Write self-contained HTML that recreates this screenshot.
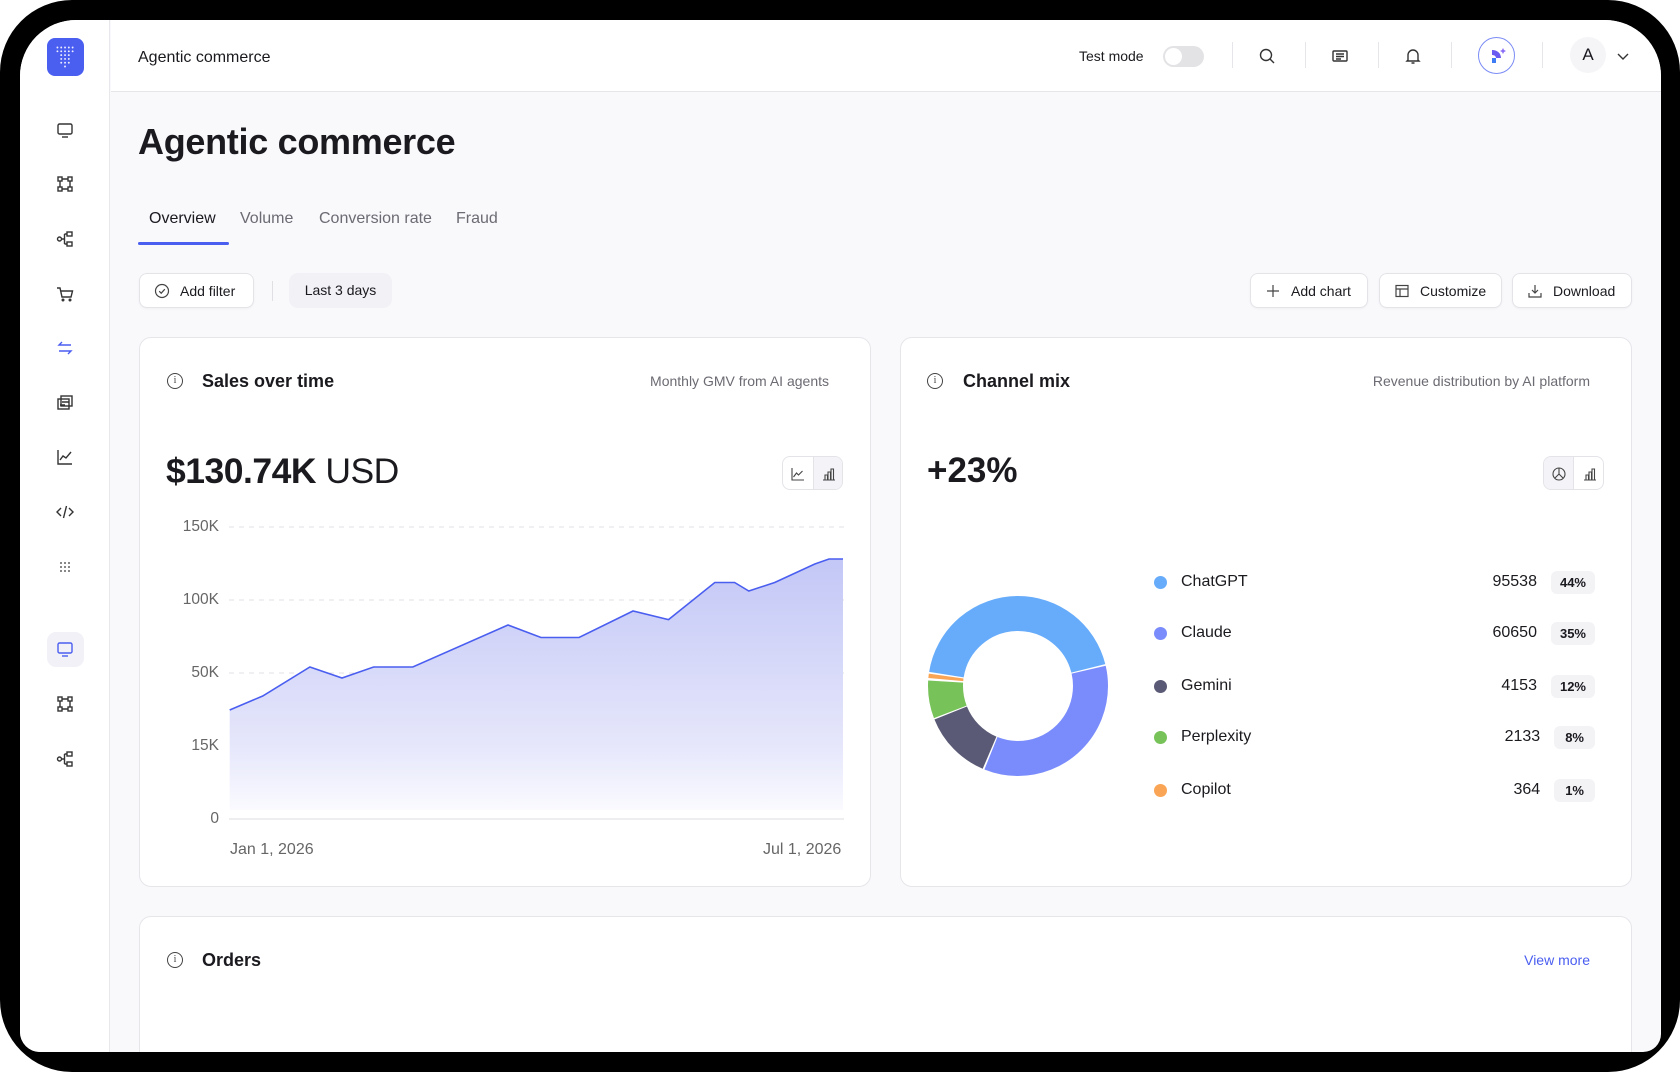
<!DOCTYPE html>
<html><head><meta charset="utf-8"><style>
*{box-sizing:border-box;margin:0;padding:0}
body{width:1680px;height:1072px;background:#fff;font-family:"Liberation Sans",sans-serif;color:#1a1a1f;position:relative;overflow:hidden}
.frame{position:absolute;left:0;top:0;width:1680px;height:1072px;background:#000;border-radius:72px}
.screen{position:absolute;left:20px;top:20px;width:1641px;height:1032px;background:#f9f8fb;border-radius:56px 56px 18px 20px;overflow:hidden}
.abs{position:absolute}
.side{position:absolute;left:0;top:0;width:90px;height:1032px;background:#fff;border-right:1px solid #e8e7ec}
.top{position:absolute;left:91px;top:0;right:0;height:72px;background:#fff;border-bottom:1px solid #e6e5ea}
.ico{position:absolute;width:20px;height:20px;stroke:#333;fill:none;stroke-width:1.4}
.btn{position:absolute;height:35px;background:#fff;border:1px solid #e4e3e8;border-radius:8px;font-size:14px;display:flex;align-items:center;gap:10px;padding:0 14px;box-shadow:0 1px 2px rgba(0,0,0,.04)}
.card{position:absolute;background:#fff;border:1px solid #e6e5ea;border-radius:12px}
.ctitle{position:absolute;font-size:18px;font-weight:bold}
.csub{position:absolute;font-size:14px;color:#6b6b73;text-align:right}
.info{position:absolute;width:16px;height:16px;border:1.2px solid #444;border-radius:50%;font-size:10px;text-align:center;line-height:14px;color:#444;font-family:"Liberation Serif",serif}
.sep{position:absolute;top:22px;width:1px;height:26px;background:#e6e5ea}
.yl{position:absolute;font-size:15.5px;color:#666;text-align:right;width:60px}
.row{position:absolute;left:1134px;width:441px;height:24px;font-size:16px;display:flex;align-items:center}
.dot{width:13px;height:13px;border-radius:50%;margin-right:14px}
.val{margin-left:auto;font-size:16px}
.pct{margin-left:14px;background:#f3f3f6;border-radius:6px;font-size:13px;font-weight:bold;padding:4px 9px}
</style></head><body>
<div class="frame"></div>
<div class="screen">
 <div class="side">
  <div class="abs" style="left:27px;top:18px;width:37px;height:38px;background:#4a5ef0;border-radius:8px;">
   <svg width="37" height="38" viewBox="0 0 37 40"><g fill="#fff" opacity=".9">
   <circle cx="10" cy="10" r="1"/><circle cx="14" cy="10" r="1"/><circle cx="18" cy="10" r="1"/><circle cx="22" cy="10" r="1"/><circle cx="26" cy="10" r="1"/>
   <circle cx="10" cy="14" r="1"/><circle cx="14" cy="14" r="1"/><circle cx="18" cy="14" r="1"/><circle cx="22" cy="14" r="1"/><circle cx="26" cy="14" r="1"/>
   <circle cx="14" cy="18" r="1"/><circle cx="18" cy="18" r="1"/><circle cx="22" cy="18" r="1"/><circle cx="14" cy="22" r="1"/><circle cx="18" cy="22" r="1"/><circle cx="22" cy="22" r="1"/>
   <circle cx="14" cy="26" r="1"/><circle cx="18" cy="26" r="1"/><circle cx="22" cy="26" r="1"/><circle cx="18" cy="30" r="1"/></g></svg>
  </div>
  <svg class="ico" style="left:35px;top:100px" viewBox="0 0 20 20"><rect x="3" y="4" width="14" height="10" rx="1.5"/><path d="M7 17h6"/></svg>
  <svg class="ico" style="left:35px;top:154px" viewBox="0 0 20 20"><rect x="3" y="3" width="4" height="4"/><rect x="13" y="3" width="4" height="4"/><rect x="3" y="13" width="4" height="4"/><rect x="13" y="13" width="4" height="4"/><path d="M7 5h6M7 15h6M5 7v6M15 7v6"/></svg>
  <svg class="ico" style="left:35px;top:209px" viewBox="0 0 20 20"><circle cx="4.5" cy="10" r="2"/><rect x="12" y="3" width="5" height="4"/><rect x="12" y="13" width="5" height="4"/><path d="M6.5 10h3M9.5 5v10M9.5 5h2.5M9.5 15h2.5"/></svg>
  <svg class="ico" style="left:35px;top:264px" viewBox="0 0 20 20"><path d="M2 4h3l2 9h9l1.5-6H6"/><circle cx="8" cy="16" r=".8"/><circle cx="15" cy="16" r=".8"/></svg>
  <svg class="ico" style="left:35px;top:318px;stroke:#4a5ef0" viewBox="0 0 20 20"><path d="M16 7H4l3-3M4 13h12l-3 3"/></svg>
  <svg class="ico" style="left:35px;top:373px" viewBox="0 0 20 20"><rect x="3" y="6" width="11" height="10"/><rect x="6" y="3" width="11" height="10"/><path d="M7 9h7M10 12H5"/></svg>
  <svg class="ico" style="left:35px;top:427px" viewBox="0 0 20 20"><path d="M3 3v14h14M5 13l3-4 3 2 5-6"/></svg>
  <svg class="ico" style="left:35px;top:482px" viewBox="0 0 20 20"><path d="M6 6l-4 4 4 4M14 6l4 4-4 4M11.5 4l-3 12"/></svg>
  <svg class="ico" style="left:35px;top:537px;fill:#333;stroke:none" viewBox="0 0 20 20"><circle cx="6" cy="6" r=".9"/><circle cx="10" cy="6" r=".9"/><circle cx="14" cy="6" r=".9"/><circle cx="6" cy="10" r=".9"/><circle cx="10" cy="10" r=".9"/><circle cx="14" cy="10" r=".9"/><circle cx="6" cy="14" r=".9"/><circle cx="10" cy="14" r=".9"/><circle cx="14" cy="14" r=".9"/></svg>
  <div class="abs" style="left:27px;top:612px;width:37px;height:35px;background:#f2f1f7;border-radius:9px"></div>
  <svg class="ico" style="left:35px;top:619px;stroke:#4a5ef0" viewBox="0 0 20 20"><rect x="3" y="4" width="14" height="10" rx="1.5"/><path d="M7 17h6"/></svg>
  <svg class="ico" style="left:35px;top:674px" viewBox="0 0 20 20"><rect x="3" y="3" width="4" height="4"/><rect x="13" y="3" width="4" height="4"/><rect x="3" y="13" width="4" height="4"/><rect x="13" y="13" width="4" height="4"/><path d="M7 5h6M7 15h6M5 7v6M15 7v6"/></svg>
  <svg class="ico" style="left:35px;top:729px" viewBox="0 0 20 20"><circle cx="4.5" cy="10" r="2"/><rect x="12" y="3" width="5" height="4"/><rect x="12" y="13" width="5" height="4"/><path d="M6.5 10h3M9.5 5v10M9.5 5h2.5M9.5 15h2.5"/></svg>
 </div>
 <div class="top">
  <div class="abs" style="left:27px;top:29px;font-size:16px">Agentic commerce</div>
 </div>
 <div class="abs" style="left:1059px;top:28px;font-size:14px">Test mode</div>
 <div class="abs" style="left:1143px;top:26px;width:41px;height:21px;border-radius:11px;background:#e3e3e6"><div style="position:absolute;left:2px;top:2px;width:17px;height:17px;border-radius:50%;background:#fff"></div></div>
 <div class="sep" style="left:1212px"></div><div class="sep" style="left:1285px"></div><div class="sep" style="left:1358px"></div><div class="sep" style="left:1431px"></div><div class="sep" style="left:1522px"></div>
 <svg class="ico" style="left:1237px;top:26px" viewBox="0 0 20 20"><circle cx="9" cy="9" r="5.5"/><path d="M13 13l4 4"/></svg>
 <svg class="ico" style="left:1310px;top:26px" viewBox="0 0 20 20"><rect x="3" y="5" width="14" height="10" rx="1"/><path d="M6 8h8M6 10.5h8M6 13h5"/></svg>
 <svg class="ico" style="left:1383px;top:26px" viewBox="0 0 20 20"><path d="M5 14V9a5 5 0 0110 0v5l1 1H4zM8.5 17h3"/></svg>
 <div class="abs" style="left:1458px;top:17px;width:37px;height:37px;border-radius:50%;border:1.5px solid #7b8cf5;background:#fff"></div>
 <svg class="abs" style="left:1464px;top:23px" width="26" height="26" viewBox="0 0 26 26"><path d="M8 7c5 0 9 3 9 8h-5c0-2-2-3-4-3z" fill="#6a5cf0"/><rect x="8" y="15" width="4" height="5" fill="#3d7cf5"/><path d="M19 5l1 2 2 1-2 1-1 2-1-2-2-1 2-1z" fill="#8a6cf5"/></svg>
 <div class="abs" style="left:1550px;top:17px;width:36px;height:36px;border-radius:50%;background:#f5f4f7;font-size:17px;text-align:center;line-height:36px">A</div>
 <svg class="ico" style="left:1593px;top:26px" viewBox="0 0 20 20"><path d="M5 8l5 5 5-5"/></svg>

 <div class="abs" style="left:118px;top:101px;font-size:36px;font-weight:bold;letter-spacing:-.3px">Agentic commerce</div>
 <div class="abs" style="left:129px;top:190px;font-size:16px;color:#1a1a1f">Overview</div>
 <div class="abs" style="left:220px;top:190px;font-size:16px;color:#6b6b73">Volume</div>
 <div class="abs" style="left:299px;top:190px;font-size:16px;color:#6b6b73">Conversion rate</div>
 <div class="abs" style="left:436px;top:190px;font-size:16px;color:#6b6b73">Fraud</div>
 <div class="abs" style="left:118px;top:222px;width:91px;height:3px;background:#4a5ef0;border-radius:2px"></div>

 <div class="btn" style="left:119px;top:253px;width:115px"><svg width="16" height="16" viewBox="0 0 16 16" fill="none" stroke="#444" stroke-width="1.2"><circle cx="8" cy="8" r="6.5"/><path d="M5.2 8.2l2 2 3.6-4"/></svg>Add filter</div>
 <div class="abs" style="left:252px;top:261px;width:1px;height:20px;background:#e0dfe4"></div>
 <div class="abs" style="left:269px;top:253px;width:103px;height:35px;background:#f2f1f5;border-radius:9px;font-size:14px;line-height:35px;text-align:center">Last 3 days</div>
 <div class="btn" style="left:1230px;top:253px;width:118px"><svg width="16" height="16" viewBox="0 0 16 16" stroke="#444" stroke-width="1.2"><path d="M8 2v12M2 8h12"/></svg>Add chart</div>
 <div class="btn" style="left:1359px;top:253px;width:123px"><svg width="16" height="16" viewBox="0 0 16 16" fill="none" stroke="#444" stroke-width="1.2"><rect x="2" y="2.5" width="12" height="11"/><path d="M2 6h12M6 6v7.5"/></svg>Customize</div>
 <div class="btn" style="left:1492px;top:253px;width:120px"><svg width="16" height="16" viewBox="0 0 16 16" fill="none" stroke="#444" stroke-width="1.2"><path d="M8 2v8M5 7l3 3 3-3M2 10v4h12v-4"/></svg>Download</div>

 <!-- Sales card -->
 <div class="card" style="left:119px;top:317px;width:732px;height:550px"></div>
 <div class="info" style="left:147px;top:353px">i</div>
 <div class="ctitle" style="left:182px;top:351px">Sales over time</div>
 <div class="csub" style="left:530px;top:353px;width:279px">Monthly GMV from AI agents</div>
 <div class="abs" style="left:146px;top:431px;font-size:35.5px;letter-spacing:-.5px"><b>$130.74K</b> USD</div>
 <div class="abs" style="left:762px;top:436px;width:61px;height:34px;border:1px solid #e4e3e8;border-radius:8px;background:#fff;overflow:hidden">
  <div style="position:absolute;left:30px;top:0;width:31px;height:34px;background:#f4f3f7;border-left:1px solid #e4e3e8"></div>
  <svg style="position:absolute;left:7px;top:9px" width="16" height="16" viewBox="0 0 16 16" fill="none" stroke="#444" stroke-width="1.1"><path d="M2 2v12h12M3.5 11l3-4 2 2 4-4"/></svg>
  <svg style="position:absolute;left:38px;top:9px" width="16" height="16" viewBox="0 0 16 16" fill="none" stroke="#444" stroke-width="1.1"><path d="M2 14h12M4 14V9h2.5v5M7 14V6h2.5v8M10 14V3h2.5v11"/></svg>
 </div>
 <div class="yl" style="left:139px;top:498px">150K</div>
 <div class="yl" style="left:139px;top:571px">100K</div>
 <div class="yl" style="left:139px;top:644px">50K</div>
 <div class="yl" style="left:139px;top:717px">15K</div>
 <div class="yl" style="left:139px;top:790px">0</div>
 <div class="abs" style="left:210px;top:821px;font-size:16px;color:#666">Jan 1, 2026</div>
 <div class="abs" style="left:743px;top:821px;font-size:16px;color:#666">Jul 1, 2026</div>
 <svg class="abs" style="left:0;top:0" width="900" height="900" viewBox="20 20 900 900">
  <defs><linearGradient id="g" x1="0" y1="0" x2="0" y2="1"><stop offset="0" stop-color="#c3c7f6"/><stop offset="0.75" stop-color="#e6e7fb"/><stop offset="1" stop-color="#fafaff"/></linearGradient></defs>
  <g stroke="#e2e2e6" stroke-dasharray="5 5"><path d="M229 527H844M229 600H844M229 673H844"/></g>
  <path d="M229 819H844" stroke="#dedee3"/>
  <path d="M229.7 710L262.7 696L309.9 667L342 678L373.6 667L412.8 667L508 625L541 637.5L579 637.5L633 611L668.5 619.6L714.8 582.5L734.6 582.5L748.8 591L774.7 582.5L814.8 564L829 559L843 559L843 810L229.7 810Z" fill="url(#g)"/>
  <path d="M229.7 710L262.7 696L309.9 667L342 678L373.6 667L412.8 667L508 625L541 637.5L579 637.5L633 611L668.5 619.6L714.8 582.5L734.6 582.5L748.8 591L774.7 582.5L814.8 564L829 559L843 559" fill="none" stroke="#4a5ef0" stroke-width="1.6"/>
 </svg>

 <!-- Channel card -->
 <div class="card" style="left:880px;top:317px;width:732px;height:550px"></div>
 <div class="info" style="left:907px;top:353px">i</div>
 <div class="ctitle" style="left:943px;top:351px">Channel mix</div>
 <div class="csub" style="left:1250px;top:353px;width:320px">Revenue distribution by AI platform</div>
 <div class="abs" style="left:907px;top:431px;font-size:35px;font-weight:bold">+23%</div>
 <div class="abs" style="left:1523px;top:436px;width:61px;height:34px;border:1px solid #e4e3e8;border-radius:8px;background:#fff;overflow:hidden">
  <div style="position:absolute;left:0;top:0;width:30px;height:34px;background:#f4f3f7;border-right:1px solid #e4e3e8"></div>
  <svg style="position:absolute;left:7px;top:9px" width="16" height="16" viewBox="0 0 16 16" fill="none" stroke="#444" stroke-width="1.1"><circle cx="8" cy="8" r="6"/><path d="M8 2v6l4 4M8 8l-4 4"/></svg>
  <svg style="position:absolute;left:38px;top:9px" width="16" height="16" viewBox="0 0 16 16" fill="none" stroke="#444" stroke-width="1.1"><path d="M2 14h12M4 14V9h2.5v5M7 14V6h2.5v8M10 14V3h2.5v11"/></svg>
 </div>
 <svg class="abs" style="left:907px;top:575px" width="182" height="182" viewBox="-91 -91 182 182">
  <g fill="none" stroke-width="35" transform="rotate(-90)">
   <circle r="72.5" stroke="#67acfa" stroke-dasharray="103 1000" stroke-dashoffset="-353"/>
   <circle r="72.5" stroke="#67acfa" stroke-dasharray="96 1000" stroke-dashoffset="0"/>
   <circle r="72.5" stroke="#7a8cfb" stroke-dasharray="158 1000" stroke-dashoffset="-97.4"/>
   <circle r="72.5" stroke="#5a5a76" stroke-dasharray="57 1000" stroke-dashoffset="-256.9"/>
   <circle r="72.5" stroke="#78c25a" stroke-dasharray="31 1000" stroke-dashoffset="-315"/>
   <circle r="72.5" stroke="#f9a555" stroke-dasharray="3.5 1000" stroke-dashoffset="-348"/>
  </g>
 </svg>
 <div class="row" style="top:550px"><span class="dot" style="background:#67acfa"></span>ChatGPT<span class="val">95538</span><span class="pct">44%</span></div>
 <div class="row" style="top:601px"><span class="dot" style="background:#7a8cfb"></span>Claude<span class="val">60650</span><span class="pct">35%</span></div>
 <div class="row" style="top:654px"><span class="dot" style="background:#5a5a76"></span>Gemini<span class="val">4153</span><span class="pct">12%</span></div>
 <div class="row" style="top:705px"><span class="dot" style="background:#78c25a"></span>Perplexity<span class="val">2133</span><span class="pct" style="padding:4px 11px">8%</span></div>
 <div class="row" style="top:758px"><span class="dot" style="background:#f9a555"></span>Copilot<span class="val">364</span><span class="pct" style="padding:4px 11px">1%</span></div>

 <!-- Orders -->
 <div class="card" style="left:119px;top:896px;width:1493px;height:200px"></div>
 <div class="info" style="left:147px;top:932px">i</div>
 <div class="ctitle" style="left:182px;top:930px">Orders</div>
 <div class="abs" style="left:1460px;top:932px;width:110px;text-align:right;font-size:14px;color:#4a5ef0">View more</div>
</div>
</body></html>
